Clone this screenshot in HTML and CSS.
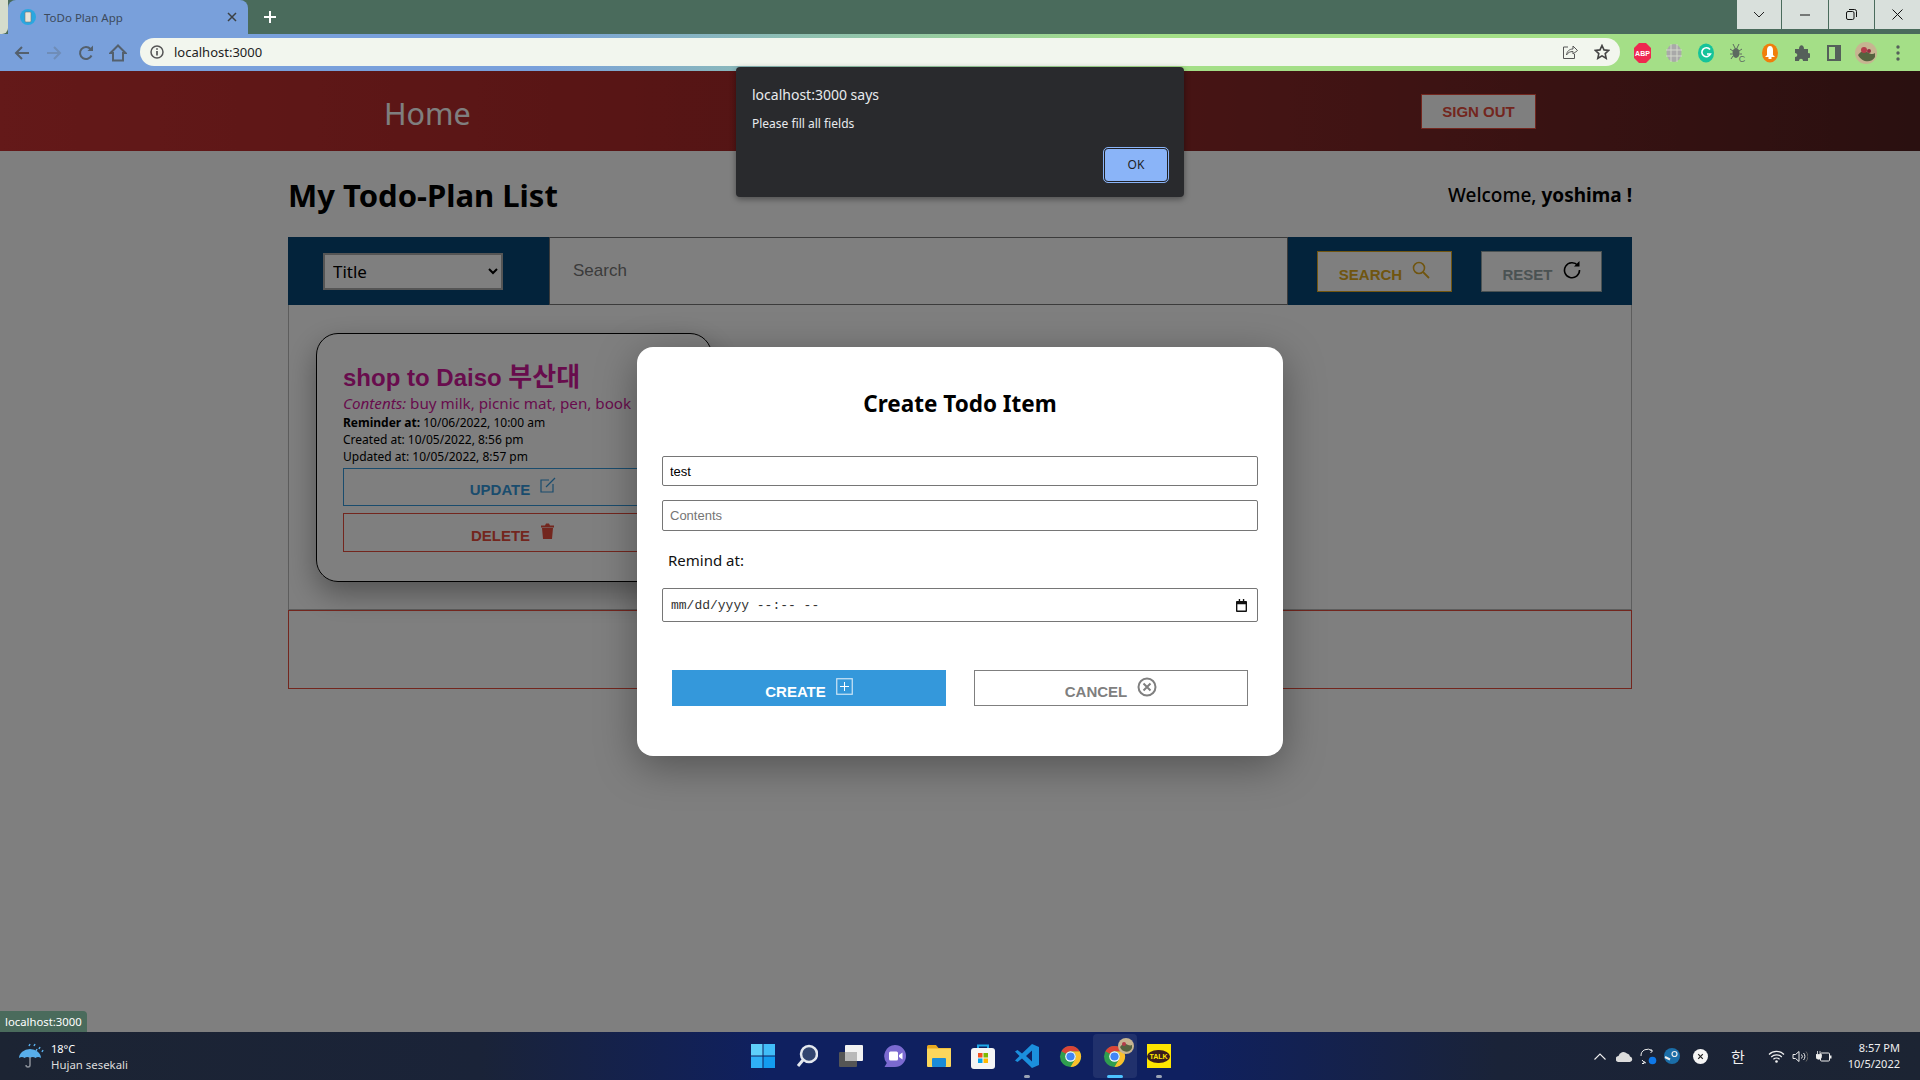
FILE: index.html
```html
<!DOCTYPE html>
<html lang="en">
<head>
  <meta charset="UTF-8">
  <meta name="viewport" content="width=device-width, initial-scale=1.0">
  <title>ToDo Plan App</title>
  <link rel="stylesheet" href="styles.css">
</head>
<body>

  <svg class="defs" width="0" height="0">
    <symbol id="chrome-logo" viewBox="0 0 24 24">
      <circle cx="12" cy="12" r="11" fill="#2f9e4f"/>
      <path d="M21.53 6.5A11 11 0 0 1 12 23L16.76 14.75A5.5 5.5 0 0 0 12 6.5Z" fill="#fbc02d"/>
      <path d="M12 1A11 11 0 0 1 21.53 6.5H12A5.5 5.5 0 0 0 7.24 9.25L2.47 6.5A11 11 0 0 1 12 1Z" fill="#db4437"/>
      <circle cx="12" cy="12" r="5.5" fill="#fff"/>
      <circle cx="12" cy="12" r="4.3" fill="#4285f4"/>
    </symbol>
  </svg>

  <div class="tabstrip">
    <div class="tab-corner"></div>
    <div class="tab">
      <svg class="favicon" width="16" height="16" viewBox="0 0 16 16">
        <circle cx="8" cy="8" r="8" fill="#2aa7e0"/>
        <rect x="5" y="3" width="6" height="10" rx="1" fill="#e8e4d8" stroke="#777" stroke-width=".6"/>
      </svg>
      <span class="tab-title">ToDo Plan App</span>
      <svg class="tab-close" width="10" height="10" viewBox="0 0 10 10"><path d="M1 1l8 8M9 1l-8 8" stroke="#3c4043" stroke-width="1.5"/></svg>
    </div>
    <svg class="tab-new" width="12" height="12" viewBox="0 0 12 12"><path d="M6 0v12M0 6h12" stroke="#fff" stroke-width="2"/></svg>
    <div class="window-controls">
      <div class="win-btn w45"><svg width="12" height="8" viewBox="0 0 12 8"><path d="M1 1l5 5 5-5" fill="none" stroke="#222" stroke-width="1"/></svg></div>
      <div class="win-btn w47"><svg width="10" height="2" viewBox="0 0 10 2"><path d="M0 1h10" stroke="#111" stroke-width="1"/></svg></div>
      <div class="win-btn w46"><svg width="11" height="11" viewBox="0 0 11 11"><rect x=".5" y="2.5" width="7.5" height="8" rx="1.5" fill="none" stroke="#111"/><path d="M3 .5h5.5a2 2 0 0 1 2 2V8" fill="none" stroke="#111"/></svg></div>
      <div class="win-btn w45 last"><svg width="11" height="11" viewBox="0 0 11 11"><path d="M.5.5l10 10M10.500.5l-10 10" stroke="#111" stroke-width="1"/></svg></div>
    </div>
  </div>

  <div class="toolbar">
    <div class="tool-btn"><svg width="16" height="16" viewBox="0 0 16 16"><path d="M15 8H2M8 2L2 8l6 6" fill="none" stroke="#54606d" stroke-width="2"/></svg></div>
    <div class="tool-btn"><svg width="16" height="16" viewBox="0 0 16 16"><path d="M1 8h13M8 2l6 6-6 6" fill="none" stroke="#6f8db8" stroke-width="2"/></svg></div>
    <div class="tool-btn"><svg width="16" height="16" viewBox="0 0 16 16"><path d="M13.500 10.500A6 6 0 1 1 12.500 4" fill="none" stroke="#54606d" stroke-width="2"/><path d="M9.500 6H15V.5z" fill="#54606d"/></svg></div>
    <div class="tool-btn"><svg width="18" height="18" viewBox="0 0 18 18"><path d="M9 1.500L1.500 9H4v7.500h10V9h2.500z" fill="none" stroke="#54606d" stroke-width="2"/></svg></div>
    <div class="omnibox">
      <svg class="info-icon" width="14" height="14" viewBox="0 0 14 14"><circle cx="7" cy="7" r="6" fill="none" stroke="#555" stroke-width="1.500"/><path d="M7 6v4.500M7 3.200v1.500" stroke="#555" stroke-width="1.700"/></svg>
      <span class="url">localhost:3000</span>
      <svg class="omni-icon" width="16" height="16" viewBox="0 0 16 16"><path d="M6 3H1.500v11.500h11V10" fill="none" stroke="#555" stroke-width="1"/><path d="M4.500 11c.5-4 3-6 6.500-6V2l4.500 4.500L11 10V7.500c-3 0-5 1-6.500 3.500z" fill="none" stroke="#555" stroke-width="1"/></svg>
      <svg class="omni-icon" width="16" height="16" viewBox="0 0 16 16"><path d="M8 1.500l2 4.400 4.700.5-3.500 3.200 1 4.700L8 11.900l-4.200 2.400 1-4.700L1.300 6.400 6 5.900z" fill="none" stroke="#444" stroke-width="1.600"/></svg>
    </div>
    <div class="extensions">
      <div class="tool-btn"><svg width="17" height="20" viewBox="0 0 17 20"><path d="M5 0h7l5 5v10l-5 5H5l-5-5V5z" fill="#ee2850"/><text x="8.500" y="13" class="abp-text" text-anchor="middle">ABP</text></svg></div>
      <div class="tool-btn"><svg width="16" height="20" viewBox="0 0 16 20"><ellipse cx="8" cy="10" rx="7.500" ry="9" fill="#a9a9a9"/><path d="M0 7h16M0 13h16M5 1v18M11 1v18" stroke="#d4d8cc" stroke-width="1"/></svg></div>
      <div class="tool-btn"><svg width="16" height="20" viewBox="0 0 16 20"><ellipse cx="8" cy="10" rx="8" ry="9.500" fill="#15c39a"/><path d="M12 6.500A4.500 4.500 0 1 0 12.500 11H9" fill="none" stroke="#fff" stroke-width="1.600"/></svg></div>
      <div class="tool-btn"><svg width="16" height="20" viewBox="0 0 16 20"><ellipse cx="6" cy="10" rx="3.500" ry="5" fill="#5d6a60"/><path d="M3 1l2 4M9 1L7 5M0 6l3 2M12 6L9 8M0 11h2.500M12 11H9.500M1 16l2-3" stroke="#5d6a60" stroke-width="1"/><text x="12" y="19" class="bug-text" text-anchor="middle">C</text></svg></div>
      <div class="tool-btn"><svg width="16" height="20" viewBox="0 0 16 20"><ellipse cx="8" cy="10" rx="8" ry="9.500" fill="#f07e0c"/><path d="M8 3c2 0 3 2 3 4v5l2 2H3l2-2V7c0-2 1-4 3-4z" fill="#fff"/><rect x="6.500" y="14" width="3" height="2" fill="#fff"/></svg></div>
      <div class="tool-btn"><svg width="15" height="16" viewBox="0 0 15 16"><path d="M0 4h4c0-5 5-5 5 0h4v4c4 0 4 5 0 5v3H8c0-3-4-3-4 0H0v-4c3 0 3-4 0-4z" fill="#55605a"/></svg></div>
      <div class="tool-btn"><svg width="14" height="16" viewBox="0 0 14 16"><rect x="1" y="1" width="12" height="14" fill="none" stroke="#55605a" stroke-width="2"/><rect x="8" y="1" width="5" height="14" fill="#55605a"/></svg></div>
      <div class="tool-btn"><svg width="22" height="22" viewBox="0 0 22 22"><circle cx="11" cy="11" r="11" fill="#c7b491"/><path d="M3 13c3-4 6-5 9-3s6 3 8 1v4c-3 6-13 6-17-2z" fill="#55633f"/><circle cx="9" cy="8" r="3" fill="#b43c4a"/><circle cx="14" cy="9" r="2" fill="#8f3040"/></svg></div>
      <div class="tool-btn"><svg width="4" height="16" viewBox="0 0 4 16"><circle cx="2" cy="2" r="1.700" fill="#55605a"/><circle cx="2" cy="8" r="1.700" fill="#55605a"/><circle cx="2" cy="14" r="1.700" fill="#55605a"/></svg></div>
    </div>
  </div>

  <div class="page">
    <header class="navbar">
      <a class="nav-home">Home</a>
      <button class="btn btn-signout">SIGN OUT</button>
    </header>

    <main class="container">
      <div class="title-row">
        <h1>My Todo-Plan List</h1>
        <div class="welcome">Welcome, <b>yoshima !</b></div>
      </div>

      <div class="search-bar">
        <div class="search-left">
          <select class="search-select">
            <option>Title</option>
            <option>Contents</option>
          </select>
        </div>
        <input class="search-input" type="text" placeholder="Search">
        <div class="search-right">
          <button class="btn btn-search">SEARCH
            <svg width="18" height="18" viewBox="0 0 18 18"><circle cx="7" cy="7" r="5.500" fill="none" stroke="#e0ab20" stroke-width="1.600"/><path d="M11 11l6 6" stroke="#e0ab20" stroke-width="1.800"/></svg>
          </button>
          <button class="btn btn-reset">RESET
            <svg width="18" height="18" viewBox="0 0 18 18"><path d="M14.800 4.500A7.500 7.500 0 1 0 16.500 9" fill="none" stroke="#000" stroke-width="1.600"/><path d="M11 5.500h5.500V0z" fill="#000"/></svg>
          </button>
        </div>
      </div>

      <div class="todo-list">
        <div class="todo-card">
          <h2 class="todo-title">shop to Daiso <span class="todo-title-ko">부산대</span></h2>
          <p class="todo-contents"><i>Contents:</i> buy milk, picnic mat, pen, book</p>
          <p class="todo-meta"><b>Reminder at:</b> 10/06/2022, 10:00 am</p>
          <p class="todo-meta">Created at: 10/05/2022, 8:56 pm</p>
          <p class="todo-meta">Updated at: 10/05/2022, 8:57 pm</p>
          <button class="btn btn-update">UPDATE
            <svg width="16" height="16" viewBox="0 0 16 16"><path d="M9 3H1v12h12V7" fill="none" stroke="#3498db" stroke-width="1.200"/><path d="M6 10l9-9" stroke="#3498db" stroke-width="1.200"/></svg>
          </button>
          <button class="btn btn-delete">DELETE
            <svg width="15" height="16" viewBox="0 0 15 16"><path d="M2 5h11l-1 11H3zM1 2.500h13V4.500H1zM5 2.500L6 .5h3l1 2" fill="#e74c3c"/></svg>
          </button>
        </div>
      </div>
      <div class="error-box"></div>
    </main>

    <div class="overlay">
      <div class="modal">
        <h2 class="modal-title">Create Todo Item</h2>
        <input class="field field-first" type="text" value="test">
        <input class="field" type="text" placeholder="Contents">
        <div class="field-label">Remind at:</div>
        <div class="field field-date">
          <span>mm/dd/yyyy --:-- --</span>
          <svg width="11" height="13" viewBox="0 0 12 14"><path d="M1 2h10a1 1 0 0 1 1 1v10a1 1 0 0 1-1 1H1a1 1 0 0 1-1-1V3a1 1 0 0 1 1-1zM1.500 5.500v7h9v-7zM3 0h1.500v2H3zM7.500 0H9v2H7.500z" fill="#111" fill-rule="evenodd"/></svg>
        </div>
        <div class="modal-actions">
          <button class="btn btn-create">CREATE
            <svg width="17" height="17" viewBox="0 0 17 17"><rect x=".75" y=".75" width="15.500" height="15.500" fill="none" stroke="#cfe6f6" stroke-width="1.200"/><path d="M8.500 4v9M4 8.500h9" stroke="#fff" stroke-width="1"/></svg>
          </button>
          <button class="btn btn-cancel">CANCEL
            <svg width="20" height="20" viewBox="0 0 20 20"><circle cx="10" cy="10" r="8.500" fill="none" stroke="#7f7f7f" stroke-width="2"/><path d="M6.500 6.500l7 7M13.500 6.500l-7 7" stroke="#7f7f7f" stroke-width="2"/></svg>
          </button>
        </div>
      </div>
    </div>

    <div class="status-bubble">localhost:3000</div>
  </div>

  <div class="alert">
    <div class="alert-title">localhost:3000 says</div>
    <div class="alert-body">Please fill all fields</div>
    <div class="alert-actions"><button class="alert-ok">OK</button></div>
  </div>

  <footer class="taskbar">
    <div class="weather">
      <svg width="26" height="26" viewBox="0 0 26 26">
        <path d="M1 15A11 9 0 0 1 23 15c-2-1.500-4-1.500-5.500 0-1.800-1.500-3.700-1.500-5.500 0-1.800-1.500-3.700-1.500-5.500 0C4.800 13.500 3 13.500 1 15z" fill="#58aeea"/>
        <path d="M12 14v8a2 2 0 0 1-4 0" fill="none" stroke="#8a8f98" stroke-width="1.500"/>
        <path d="M12 1l-1 2M17 1l-1 2M22 4l-1 2M25 7l-1 2M19 6l-1 2" stroke="#58aeea" stroke-width="1.500"/>
      </svg>
      <div class="weather-text">
        <div class="weather-temp">18°C</div>
        <div class="weather-desc">Hujan sesekali</div>
      </div>
    </div>

    <div class="task-icons">
      <div class="task-icon">
        <svg width="24" height="24" viewBox="0 0 24 24"><rect width="11.500" height="11.500" fill="#5fd0fa"/><rect x="12.500" width="11.500" height="11.500" fill="#41bdf8"/><rect y="12.500" width="11.500" height="11.500" fill="#2fb0f6"/><rect x="12.500" y="12.500" width="11.500" height="11.500" fill="#139cf0"/></svg>
      </div>
      <div class="task-icon">
        <svg width="22" height="24" viewBox="0 0 22 24"><circle cx="13" cy="10" r="8" fill="#33456f" stroke="#e4e8ef" stroke-width="2.500"/><path d="M7 16l-5 6" stroke="#e4e8ef" stroke-width="3"/></svg>
      </div>
      <div class="task-icon">
        <svg width="24" height="22" viewBox="0 0 24 22"><rect x="6" y="0" width="18" height="16" rx="1" fill="#f2f2f2"/><rect y="7" width="18" height="15" rx="1" fill="#555"/><rect x="6" y="7" width="12" height="9" fill="#b9b9b9"/></svg>
      </div>
      <div class="task-icon">
        <svg width="24" height="24" viewBox="0 0 24 24"><path d="M12 1a11 11 0 1 1 0 22H1.500l2.300-4A11 11 0 0 1 12 1z" fill="#7b6ad0"/><rect x="6" y="7.500" width="9" height="9" rx="1.500" fill="#fff"/><path d="M16 11l3.500-2.500v7L16 13z" fill="#fff"/></svg>
      </div>
      <div class="task-icon">
        <svg width="24" height="22" viewBox="0 0 24 22"><path d="M0 1.500A1.500 1.500 0 0 1 1.500 0H9l2.500 3H24v4H0z" fill="#e8a820"/><rect y="3.500" width="24" height="18.500" rx="1" fill="#fbd65c"/><rect x="5" y="13" width="14" height="9" rx="1" fill="#1a8bd8"/></svg>
      </div>
      <div class="task-icon">
        <svg width="24" height="26" viewBox="0 0 24 26"><path d="M7 6V2.500h10V6" fill="none" stroke="#1ea7e8" stroke-width="2"/><rect y="5" width="24" height="21" rx="3" fill="#f5f5f5"/><rect x="7" y="10" width="4.500" height="4.500" fill="#f25022"/><rect x="12.500" y="10" width="4.500" height="4.500" fill="#7fba00"/><rect x="7" y="15.500" width="4.500" height="4.500" fill="#00a4ef"/><rect x="12.500" y="15.500" width="4.500" height="4.500" fill="#ffb900"/></svg>
      </div>
      <div class="task-icon">
        <svg width="24" height="24" viewBox="0 0 24 24"><path d="M17 0l7 3v18l-7 3L7 14.500 2.500 18 0 16.500 4.500 12 0 7.500 2.500 6 7 9.500zM17 6.500L11 12l6 5.500z" fill="#1b8fdd"/></svg>
        <span class="task-dot"></span>
      </div>
      <div class="task-icon"><svg width="23" height="23"><use href="#chrome-logo"/></svg></div>
      <div class="task-icon task-active">
        <svg width="23" height="23"><use href="#chrome-logo"/></svg>
        <svg class="task-badge" width="16" height="16" viewBox="0 0 16 16"><circle cx="8" cy="8" r="8" fill="#c7b491"/><path d="M2 9c2-3 4-4 6-3s4 2 6 1v3c-2 5-10 5-12-1z" fill="#55633f"/><circle cx="6" cy="6" r="2" fill="#b43c4a"/></svg>
        <span class="task-dot task-dot-active"></span>
      </div>
      <div class="task-icon">
        <div class="kakao"><span class="kakao-bubble">TALK</span></div>
        <span class="task-dot"></span>
      </div>
    </div>

    <div class="tray">
      <div class="tray-item"><svg width="12" height="7" viewBox="0 0 12 7"><path d="M.5 6.500L6 1l5.500 5.500" fill="none" stroke="#f0f0f0" stroke-width="1.100"/></svg></div>
      <div class="tray-item"><svg width="17" height="11" viewBox="0 0 17 11"><path d="M3 11a3 3 0 0 1-.5-6A5 5 0 0 1 11 2.500a3.500 3.500 0 0 1 3 3A2.800 2.800 0 0 1 14 11z" fill="#dcdcdc"/></svg></div>
      <div class="tray-item"><svg width="17" height="17" viewBox="0 0 17 17"><path d="M1 8A6.500 6.500 0 0 1 12 3M10.500 1l2 2-2 2M2 12a6.500 6.500 0 0 0 4 3M4 13v2.500H2" fill="none" stroke="#eee" stroke-width="1"/><circle cx="12.500" cy="12.500" r="3.800" fill="#0f78e8"/></svg></div>
      <div class="tray-item"><svg width="16" height="16" viewBox="0 0 16 16"><circle cx="8" cy="8" r="8" fill="#1b6ea8"/><circle cx="10.500" cy="6" r="2.500" fill="none" stroke="#eee" stroke-width="1.200"/><path d="M1 9l5 2.500" stroke="#eee" stroke-width="2"/></svg></div>
      <div class="tray-item tray-x"><svg width="15" height="15" viewBox="0 0 15 15"><circle cx="7.500" cy="7.500" r="7.500" fill="#f5f5f5"/><path d="M5.200 5.200l4.600 4.600M9.800 5.200l-4.600 4.600" stroke="#222" stroke-width="1.200"/></svg></div>
      <div class="tray-item tray-ime">한</div>
      <div class="tray-item tray-wifi"><svg width="17" height="13" viewBox="0 0 17 13"><path d="M1 4.500a10.500 10.500 0 0 1 15 0M3.200 7a7.500 7.500 0 0 1 10.600 0M5.400 9.300a4.400 4.400 0 0 1 6.200 0" fill="none" stroke="#f0f0f0" stroke-width="1.200"/><circle cx="8.500" cy="11.500" r="1.300" fill="#f0f0f0"/></svg></div>
      <div class="tray-item"><svg width="16" height="13" viewBox="0 0 16 13"><path d="M1 4.500h2.500L7 1.500v10l-3.500-3H1z" fill="none" stroke="#eee" stroke-width="1"/><path d="M9.500 4.500a3 3 0 0 1 0 4M11.500 3a5 5 0 0 1 0 7" fill="none" stroke="#eee" stroke-width="1"/><path d="M14 1.500a7.500 7.500 0 0 1 0 10" fill="none" stroke="#666" stroke-width="1"/></svg></div>
      <div class="tray-item"><svg width="16" height="13" viewBox="0 0 16 13"><rect x="4.500" y="3" width="9" height="8" rx="1" fill="none" stroke="#eee" stroke-width="1"/><rect x="14" y="5.500" width="1.500" height="3" fill="#eee"/><path d="M0 4.500h5.500V6.500a2.700 2.700 0 0 1-5.500 0zM1.500 1v3.500M4 1v3.500" fill="#eee" stroke="#eee" stroke-width=".8"/></svg></div>
      <div class="clock">
        <div>8:57 PM</div>
        <div>10/5/2022</div>
      </div>
    </div>
  </footer>

</body>
</html>
```

FILE: styles.css
```css
* {
  box-sizing: border-box;
}

body {
  font-family: "Noto Sans", Arial, sans-serif;
  margin: 0;
  width: 1920px;
  height: 1080px;
  overflow: hidden;
  display: flex;
  flex-direction: column;
  position: relative;
}

.defs {
  position: absolute;
}

/* browser chrome */
.tabstrip {
  height: 34px;
  background: #4a6b5c;
  display: flex;
  align-items: center;
  flex-shrink: 0;
}

.tab-corner {
  width: 8px;
  height: 34px;
  background: #d5dccc;
  border-bottom-right-radius: 6px;
}

.tab {
  width: 240px;
  height: 34px;
  background: #79a0db;
  border-radius: 8px 8px 0 0;
  display: flex;
  align-items: center;
  padding: 0 11px 0 12px;
}

.tab-title {
  font-size: 11.5px;
  color: #3c4a5c;
  margin-left: 8px;
  flex: 1;
}

.tab-new {
  margin-left: 16px;
}

.window-controls {
  margin-left: auto;
  align-self: flex-start;
  display: flex;
  height: 29px;
}

.win-btn {
  height: 29px;
  background: #d9e0dc;
  border-right: 1px solid #4a6b5c;
  display: flex;
  align-items: center;
  justify-content: center;
}

.win-btn.last {
  border-right: none;
}

.w45 { width: 45px; }
.w46 { width: 46px; }
.w47 { width: 47px; }

.toolbar {
  height: 37px;
  background: linear-gradient(90deg, #79a0db 0%, #79a0db 28%, #8fc0b0 42%, #a4df87 60%, #a4df87 100%);
  display: flex;
  align-items: center;
  padding: 0 6px;
  flex-shrink: 0;
}

.tool-btn {
  width: 32px;
  height: 28px;
  display: flex;
  align-items: center;
  justify-content: center;
}

.omnibox {
  flex: 1;
  height: 28px;
  margin: 0 6px 1px 6px;
  background: #f2f6ee;
  border-radius: 14px;
  display: flex;
  align-items: center;
  padding: 0 10px 0 10px;
}

.url {
  font-size: 13px;
  color: #222;
  margin-left: 10px;
  flex: 1;
}

.omni-icon {
  margin-left: 16px;
}

.extensions {
  display: flex;
}

.abp-text {
  font-family: "Liberation Sans", Arial, sans-serif;
  font-size: 7px;
  font-weight: bold;
  fill: #fff;
}

.bug-text {
  font-family: "Liberation Sans", Arial, sans-serif;
  font-size: 9px;
  fill: #5d6a60;
}

/* page */
.page {
  flex: 1;
  position: relative;
  background: #fff;
  overflow: hidden;
}

.navbar {
  height: 80px;
  background: linear-gradient(90deg, #c83232 0%, #b02a2a 33%, #862828 67%, #542020 100%);
  display: flex;
  align-items: center;
  padding: 0 384px;
}

.nav-home {
  font-size: 30.5px;
  color: #fff;
  margin-top: 4px;
}

.btn {
  font-family: "Liberation Sans", Arial, sans-serif;
  font-weight: bold;
  font-size: 15px;
  background: #fff;
  cursor: pointer;
  display: flex;
  align-items: center;
  justify-content: center;
  gap: 10px;
  padding: 6px 0 0 0;
}

.btn svg {
  position: relative;
  top: -4.5px;
}

.btn-signout {
  margin-left: auto;
  width: 115px;
  height: 35px;
  padding-top: 0;
  border: 1px solid #e74c3c;
  color: #e74c3c;
}

.container {
  width: 1344px;
  margin: 0 auto;
}

.title-row {
  height: 86px;
  display: flex;
  justify-content: space-between;
  align-items: center;
}

h1 {
  font-size: 31px;
  margin: 2px 0 0 0;
  color: #000;
}

.welcome {
  font-size: 19px;
  font-weight: 500;
  color: #000;
  margin-top: 2px;
}

.search-bar {
  height: 68px;
  background: #064676;
  display: flex;
}

.search-left {
  width: 261px;
  display: flex;
  align-items: center;
  padding-left: 35px;
}

.search-select {
  width: 180px;
  height: 37px;
  font-family: "Noto Sans", Arial, sans-serif;
  font-size: 17px;
  padding-left: 4px;
  background: #fff;
  border: 2px solid #aaa;
  color: #000;
}

.search-input {
  width: 739px;
  height: 68px;
  border: 1px solid #777;
  padding: 0 23px 0 23px;
  font-family: "Liberation Sans", Arial, sans-serif;
  font-size: 17px;
  outline: none;
}

.search-input::placeholder {
  color: #777;
}

.search-right {
  flex: 1;
  display: flex;
  align-items: center;
  padding-left: 29px;
  gap: 29px;
}

.btn-search {
  width: 135px;
  height: 41px;
  border: 1px solid #e0ab20;
  color: #e0ab20;
}

.btn-reset {
  width: 121px;
  height: 41px;
  border: 1px solid #95a5a6;
  color: #95a5a6;
}

.todo-list {
  height: 305px;
  border: 1px solid #bbb;
  border-top: none;
  padding: 28px 0 0 27px;
}

.todo-card {
  width: 396px;
  height: 249px;
  border: 1.5px solid #000;
  border-radius: 22px;
  padding: 29px 26px 0 26px;
  box-shadow: 0 12px 30px rgba(0, 0, 0, 0.35);
}

.todo-title {
  font-family: "Liberation Sans", "Noto Sans CJK KR", sans-serif;
  font-size: 24px;
  line-height: 29px;
  margin: 0;
  color: #d0189a;
}

.todo-title-ko {
  font-size: 26px;
}

.todo-contents {
  font-size: 15.2px;
  line-height: 22px;
  margin: 0;
  color: #d0189a;
  white-space: nowrap;
}

.todo-meta {
  font-size: 12px;
  line-height: 17px;
  margin: 0;
  color: #000;
}

.btn-update {
  width: 340px;
  height: 38px;
  margin-top: 3px;
  padding-top: 5px;
  border: 1px solid #3498db;
  color: #3498db;
}

.btn-delete {
  width: 340px;
  height: 39px;
  margin-top: 7px;
  border: 1px solid #e74c3c;
  color: #e74c3c;
}

.error-box {
  height: 79px;
  border: 1px solid #e74c3c;
}

/* modal */
.overlay {
  position: absolute;
  inset: 0;
  background: rgba(0, 0, 0, 0.5);
  display: flex;
  align-items: center;
  justify-content: center;
}

.modal {
  width: 646px;
  height: 409px;
  background: #fff;
  border-radius: 16px;
  padding: 41px 25px 0 25px;
  box-shadow: 0 10px 40px rgba(0, 0, 0, 0.35);
}

.modal-title {
  font-size: 22.5px;
  line-height: 32px;
  text-align: center;
  margin: 0 0 36px 0;
  color: #000;
}

.field {
  display: block;
  width: 100%;
  height: 31px;
  border: 1px solid #767676;
  border-radius: 2px;
  font-family: "Liberation Sans", Arial, sans-serif;
  font-size: 13px;
  padding: 0 7px;
  margin-bottom: 14px;
  color: #000;
}

.field-first {
  height: 30px;
}

.field-label {
  font-size: 15px;
  line-height: 22px;
  margin: 18px 0 17px 6px;
  color: #111;
}

.field-date {
  height: 34px;
  display: flex;
  align-items: center;
  justify-content: space-between;
  font-family: "Liberation Mono", monospace;
  font-size: 13px;
  padding: 1px 10px 0 8px;
  margin-bottom: 0;
  color: #333;
}

.modal-actions {
  display: flex;
  gap: 28px;
  padding: 0 10px;
  margin-top: 48px;
}

.btn-create, .btn-cancel {
  width: 274px;
  height: 36px;
}

.btn-create {
  background: #3498db;
  border: 1px solid #3498db;
  color: #fff;
}

.btn-cancel {
  background: #fff;
  border: 1px solid #7f7f7f;
  color: #7f7f7f;
}

.status-bubble {
  position: absolute;
  left: 0;
  bottom: 0;
  height: 21px;
  width: 87px;
  background: #4a6b5c;
  border-top-right-radius: 4px;
  color: #fff;
  font-size: 11.3px;
  line-height: 21px;
  padding-left: 5px;
  white-space: nowrap;
}

/* js alert */
.alert {
  position: absolute;
  left: 736px;
  top: 67px;
  width: 448px;
  height: 130px;
  background: #292a2d;
  border-radius: 4px;
  padding: 18px 16px 0 16px;
  box-shadow: 0 2px 6px rgba(0, 0, 0, 0.4);
  color: #e8eaed;
}

.alert-title {
  font-size: 14px;
  line-height: 20px;
}

.alert-body {
  font-size: 12px;
  line-height: 18px;
  margin-top: 10px;
}

.alert-actions {
  display: flex;
  justify-content: flex-end;
  margin-top: 15px;
}

.alert-ok {
  width: 64px;
  height: 34px;
  background: #8ab4f8;
  border: 1px solid #202124;
  outline: 1px solid #8ab4f8;
  border-radius: 4px;
  font-family: "Noto Sans", Arial, sans-serif;
  font-size: 12px;
  color: #202124;
  padding-bottom: 2px;
}

/* taskbar */
.taskbar {
  height: 48px;
  background: linear-gradient(90deg, #1c2433 0%, #1a2338 25%, #0f2060 40%, #0f2060 62%, #1a2338 78%, #1c2433 100%);
  display: grid;
  grid-template-columns: 1fr auto 1fr;
  align-items: center;
  flex-shrink: 0;
}

.weather {
  display: flex;
  align-items: center;
  padding-left: 18px;
  gap: 7px;
}

.weather-text {
  font-size: 11px;
  line-height: 16px;
  color: #fff;
  padding-top: 2px;
}

.weather-desc {
  color: #ddd;
  font-size: 11.4px;
}

.task-icons {
  display: flex;
  padding-left: 1px;
}

.task-icon {
  width: 44px;
  height: 44px;
  position: relative;
  display: flex;
  align-items: center;
  justify-content: center;
}

.task-active {
  background: rgba(255, 255, 255, 0.08);
  border-radius: 4px;
}

.task-badge {
  position: absolute;
  right: 3px;
  top: 4px;
}

.task-dot {
  position: absolute;
  bottom: 0;
  left: 19px;
  width: 6px;
  height: 3px;
  border-radius: 2px;
  background: #9aa3b5;
}

.task-dot-active {
  left: 14px;
  width: 16px;
  background: #4cc2ff;
}

.kakao {
  width: 24px;
  height: 24px;
  background: #fee500;
  display: flex;
  align-items: center;
  justify-content: center;
}

.kakao-bubble {
  background: #3a1d1d;
  color: #fee500;
  font-family: "Liberation Sans", Arial, sans-serif;
  font-size: 7px;
  font-weight: bold;
  padding: 3px 2px;
  border-radius: 50%;
}

.tray {
  display: flex;
  justify-content: flex-end;
  align-items: center;
  padding-right: 20px;
}

.tray-item {
  width: 24px;
  display: flex;
  align-items: center;
  justify-content: center;
}

.tray-x {
  width: 32px;
}

.tray-ime {
  width: 44px;
  font-family: "Noto Sans CJK KR", sans-serif;
  font-size: 15px;
  color: #f0f0f0;
}

.tray-wifi {
  margin-left: 4px;
}

.clock {
  margin-left: 8px;
  width: 56px;
  text-align: right;
  font-size: 11px;
  line-height: 16px;
  color: #f0f0f0;
  white-space: nowrap;
}
```
